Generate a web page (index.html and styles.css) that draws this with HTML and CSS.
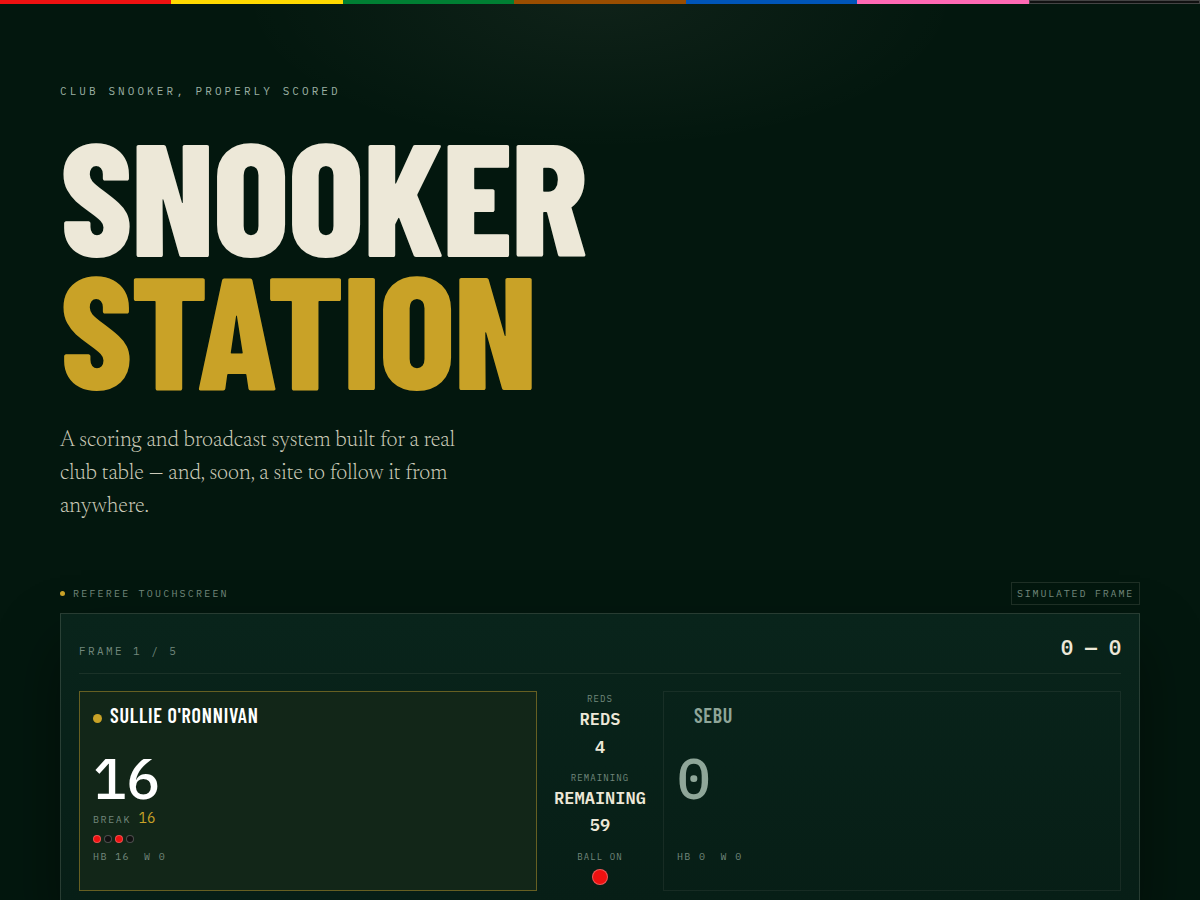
FILE: index.html
```html
<!DOCTYPE html>
<html lang="en">
<head>
<meta charset="utf-8">
<meta name="viewport" content="width=device-width, initial-scale=1">
<title>Snooker Station</title>
<link rel="stylesheet" href="styles.css">
</head>
<body>
<div class="ball-strip" aria-hidden="true">
  <span class="ball-red"></span><span class="ball-yellow"></span><span class="ball-green"></span><span class="ball-brown"></span><span class="ball-blue"></span><span class="ball-pink"></span><span class="ball-black"></span>
</div>
<main class="page">
  <header class="hero">
    <p class="eyebrow">Club snooker, properly scored</p>
    <h1 class="title"><span class="title-line">Snooker</span><span class="title-line title-accent">Station</span></h1>
    <p class="lede">A scoring and broadcast system built for a real club table — and, soon, a site to follow it from anywhere.</p>
  </header>

  <section class="demo">
    <div class="demo-head">
      <h2 class="demo-label">Referee touchscreen</h2>
      <span class="demo-tag">Simulated frame</span>
    </div>
    <div class="board">
      <div class="board-head">
        <span class="board-frame">Frame 1 / 5</span>
        <span class="board-score">0 — 0</span>
      </div>
      <div class="board-grid">
        <article class="player player-active">
          <h3 class="player-name">Sullie O'Ronnivan</h3>
          <div class="player-points">16</div>
          <div class="player-break">Break <span class="break-value">16</span></div>
          <div class="potted"><span class="ball-red"></span><span class="ball-black"></span><span class="ball-red"></span><span class="ball-black"></span></div>
          <div class="player-stats"><span>HB 16</span><span>W 0</span></div>
        </article>
        <div class="table-state">
          <div class="state"><span class="state-label">Reds</span><span class="state-value">REDS</span><span class="state-value">4</span></div>
          <div class="state"><span class="state-label">Remaining</span><span class="state-value">REMAINING</span><span class="state-value">59</span></div>
          <div class="state"><span class="state-label">Ball on</span><span class="ball-on ball-red"></span></div>
        </div>
        <article class="player">
          <h3 class="player-name">Sebu</h3>
          <div class="player-points">0</div>
          <div class="player-break"></div>
          <div class="potted"></div>
          <div class="player-stats"><span>HB 0</span><span>W 0</span></div>
        </article>
      </div>
    </div>
  </section>
</main>
</body>
</html>
```
FILE: styles.css
```css
:root {
  --bg: #03170e;
  --cream: #ede8d8;
  --gold: #c9a227;
  --muted: #9bb0a3;
  --dim: #72887c;
  --line: rgba(237, 232, 216, 0.12);
  --mono: "IBM Plex Mono", "Liberation Mono", monospace;
  --display: "Barlow Condensed", "Roboto Condensed", sans-serif;
  --serif: "Newsreader", "Liberation Serif", serif;
}

* { box-sizing: border-box; }

html { background: var(--bg); }

body {
  margin: 0;
  color: var(--cream);
  font-family: var(--mono);
  line-height: 1.6;
  background: radial-gradient(ellipse 360px 150px at 50% 0, rgba(237, 232, 216, 0.05), transparent) no-repeat;
}

h1, h2, h3, p { margin: 0; font-weight: inherit; }

.ball-red { background: #ee1111; }
.ball-yellow { background: #ffd900; }
.ball-green { background: #007f33; }
.ball-brown { background: #994d00; }
.ball-blue { background: #0055b8; }
.ball-pink { background: #ff69b4; }
.ball-black { background: #111111; border: 1px solid #444444; }

.ball-strip {
  display: grid;
  grid-template-columns: repeat(7, 1fr);
  height: 4px;
}

.page { padding: 78px 60px 40px; }

.eyebrow {
  font-size: 11px;
  line-height: 18px;
  letter-spacing: 0.28em;
  text-transform: uppercase;
  color: var(--muted);
}

.title {
  margin-top: 27px;
  font-family: var(--display);
  font-size: 160px;
  font-weight: 800;
  line-height: 133px;
  letter-spacing: -0.01em;
  text-transform: uppercase;
}
.title-line { display: block; }
.title-accent { color: var(--gold); }

.lede {
  max-width: 420px;
  margin-top: 32px;
  font-family: var(--serif);
  font-size: 22px;
  font-weight: 300;
  line-height: 33px;
  color: #cccbb9;
}

.demo { margin-top: 58px; }
.demo-head {
  display: flex;
  align-items: center;
  justify-content: space-between;
  margin-bottom: 8px;
  font-size: 10px;
  line-height: 15px;
  text-transform: uppercase;
  color: var(--dim);
}
.demo-label {
  display: flex;
  align-items: center;
  gap: 8px;
  font-size: 10px;
  letter-spacing: 0.22em;
}
.demo-label::before {
  content: "";
  width: 5px;
  height: 5px;
  border-radius: 50%;
  background: var(--gold);
}
.demo-tag {
  padding: 3px 5px;
  border: 1px solid var(--line);
  letter-spacing: 0.18em;
}

.board {
  padding: 18px;
  border: 1px solid rgba(237, 232, 216, 0.15);
  background: linear-gradient(#09241b, #071e16);
  box-shadow: 0 30px 60px rgba(0, 0, 0, 0.4);
}
.board-head {
  display: flex;
  align-items: center;
  justify-content: space-between;
  padding-bottom: 9px;
  margin-bottom: 17px;
  border-bottom: 1px solid rgba(237, 232, 216, 0.08);
}
.board-frame {
  padding-top: 8px;
  font-size: 11px;
  letter-spacing: 0.22em;
  text-transform: uppercase;
  color: var(--dim);
}
.board-score { font-size: 20px; font-weight: 600; }

.board-grid {
  display: grid;
  grid-template-columns: 1fr auto 1fr;
  gap: 17px;
}

.player {
  padding: 10px 13px 25px;
  border: 1px solid rgba(237, 232, 216, 0.07);
  color: #8fa699;
}
.player-active {
  border-color: #665f22;
  background: #122618;
  color: #ffffff;
}
.player-name {
  display: flex;
  align-items: center;
  gap: 8px;
  font-family: var(--display);
  font-size: 20px;
  font-weight: 600;
  line-height: 26px;
  letter-spacing: 0.04em;
  text-transform: uppercase;
}
.player-name::before {
  content: "";
  width: 9px;
  height: 9px;
  margin-top: 6px;
  border-radius: 50%;
}
.player-active .player-name::before { background: var(--gold); }
.player-points {
  margin-top: 22px;
  font-size: 56px;
  font-weight: 500;
  line-height: 56px;
}
.player-break {
  height: 22px;
  margin-top: 1px;
  font-size: 10px;
  line-height: 22px;
  letter-spacing: 0.16em;
  text-transform: uppercase;
  color: var(--dim);
}
.break-value { font-size: 14px; letter-spacing: 0; color: var(--gold); }
.potted {
  display: flex;
  gap: 3px;
  height: 8px;
  margin: 6px 0;
}
.potted span {
  width: 8px;
  height: 8px;
  border: 1px solid rgba(255, 255, 255, 0.25);
  border-radius: 50%;
}
.player-stats {
  display: flex;
  gap: 14px;
  font-size: 10px;
  letter-spacing: 0.14em;
  color: var(--dim);
}

.table-state {
  display: flex;
  flex-direction: column;
  gap: 10px;
  padding-top: 1px;
  text-align: center;
}
.state {
  display: flex;
  flex-direction: column;
  align-items: center;
}
.state-label {
  font-size: 9px;
  letter-spacing: 0.12em;
  text-transform: uppercase;
  color: var(--dim);
}
.state-value { font-size: 17px; font-weight: 600; }
.ball-on {
  width: 16px;
  height: 16px;
  margin-top: 5px;
  border: 1px solid rgba(255, 255, 255, 0.3);
  border-radius: 50%;
}
```
